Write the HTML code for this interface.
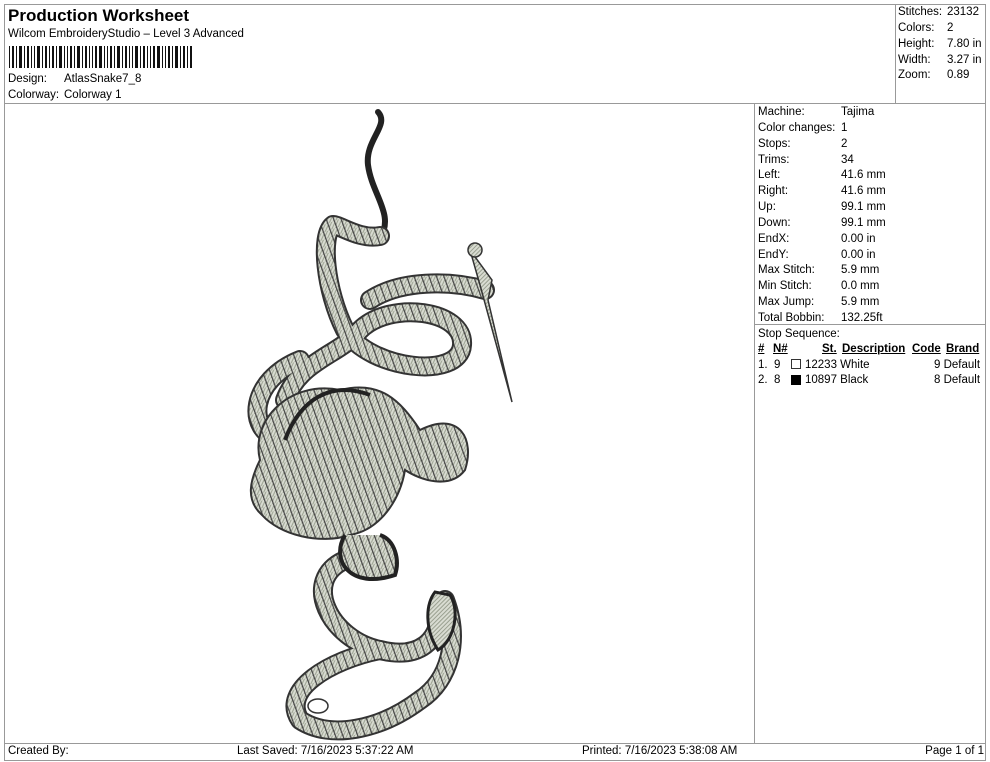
<!DOCTYPE html>
<html><head><meta charset="utf-8"><style>
*{margin:0;padding:0;box-sizing:border-box}
body{width:990px;height:762px;background:#fff;font-family:"Liberation Sans",Arial,sans-serif;color:#000;position:relative;overflow:hidden}
.a{position:absolute;white-space:nowrap}
.l{position:absolute;background:#999}
.t{font-size:11.5px}
.r div{height:15.85px;line-height:15.85px}
</style></head><body>
<div class="l" style="left:4px;top:4px;width:982px;height:1px"></div>
<div class="l" style="left:4px;top:4px;width:1px;height:757px"></div>
<div class="l" style="left:985px;top:4px;width:1px;height:757px"></div>
<div class="l" style="left:4px;top:103px;width:982px;height:1px"></div>
<div class="l" style="left:895px;top:4px;width:1px;height:99px"></div>
<div class="l" style="left:754px;top:103px;width:1px;height:640px"></div>
<div class="l" style="left:754px;top:324px;width:232px;height:1px"></div>
<div class="l" style="left:4px;top:743px;width:982px;height:1px"></div>
<div class="l" style="left:4px;top:760px;width:982px;height:1px"></div>

<div class="a" style="left:8px;top:6px;font-size:17px;font-weight:bold">Production Worksheet</div>
<div class="a t" style="left:8px;top:28px">Wilcom EmbroideryStudio – Level 3 Advanced</div>
<svg class="a" style="left:9px;top:46px" width="185" height="22">
<g fill="#111">
<rect x="0" width="1" height="22"/><rect x="3" width="2" height="22"/><rect x="7" width="1" height="22"/><rect x="10" width="3" height="22"/><rect x="15" width="1" height="22"/><rect x="18" width="2" height="22"/><rect x="22" width="1" height="22"/><rect x="25" width="1" height="22"/><rect x="28" width="3" height="22"/><rect x="33" width="1" height="22"/><rect x="36" width="2" height="22"/><rect x="40" width="1" height="22"/><rect x="43" width="2" height="22"/><rect x="47" width="1" height="22"/><rect x="50" width="3" height="22"/><rect x="55" width="1" height="22"/><rect x="58" width="1" height="22"/><rect x="61" width="2" height="22"/><rect x="65" width="1" height="22"/><rect x="68" width="3" height="22"/><rect x="73" width="1" height="22"/><rect x="76" width="2" height="22"/><rect x="80" width="1" height="22"/><rect x="83" width="1" height="22"/><rect x="86" width="2" height="22"/><rect x="90" width="3" height="22"/><rect x="95" width="1" height="22"/><rect x="98" width="1" height="22"/><rect x="101" width="2" height="22"/><rect x="105" width="1" height="22"/><rect x="108" width="3" height="22"/><rect x="113" width="1" height="22"/><rect x="116" width="2" height="22"/><rect x="120" width="1" height="22"/><rect x="123" width="1" height="22"/><rect x="126" width="3" height="22"/><rect x="131" width="1" height="22"/><rect x="134" width="2" height="22"/><rect x="138" width="1" height="22"/><rect x="141" width="1" height="22"/><rect x="144" width="2" height="22"/><rect x="148" width="3" height="22"/><rect x="153" width="1" height="22"/><rect x="156" width="1" height="22"/><rect x="159" width="2" height="22"/><rect x="163" width="1" height="22"/><rect x="166" width="3" height="22"/><rect x="171" width="1" height="22"/><rect x="174" width="2" height="22"/><rect x="178" width="1" height="22"/><rect x="181" width="2" height="22"/>
</g></svg>
<div class="a t" style="left:8px;top:73px">Design:</div><div class="a t" style="left:64px;top:73px">AtlasSnake7_8</div>
<div class="a t" style="left:8px;top:89px">Colorway:</div><div class="a t" style="left:64px;top:89px">Colorway 1</div>

<div class="a t r" style="left:898px;top:5px"><div>Stitches:</div><div>Colors:</div><div>Height:</div><div>Width:</div><div>Zoom:</div></div>
<div class="a t r" style="left:947px;top:5px"><div>23132</div><div>2</div><div>7.80 in</div><div>3.27 in</div><div>0.89</div></div>

<div class="a t r" style="left:758px;top:105px"><div>Machine:</div><div>Color changes:</div><div>Stops:</div><div>Trims:</div><div>Left:</div><div>Right:</div><div>Up:</div><div>Down:</div><div>EndX:</div><div>EndY:</div><div>Max Stitch:</div><div>Min Stitch:</div><div>Max Jump:</div><div>Total Bobbin:</div><div>Stop Sequence:</div></div>
<div class="a t r" style="left:841px;top:105px"><div>Tajima</div><div>1</div><div>2</div><div>34</div><div>41.6 mm</div><div>41.6 mm</div><div>99.1 mm</div><div>99.1 mm</div><div>0.00 in</div><div>0.00 in</div><div>5.9 mm</div><div>0.0 mm</div><div>5.9 mm</div><div>132.25ft</div></div>
<div class="a t" style="left:758px;top:343px;font-weight:bold;text-decoration:underline">#</div>
<div class="a t" style="left:773px;top:343px;font-weight:bold;text-decoration:underline">N#</div>
<div class="a t" style="left:822px;top:343px;font-weight:bold;text-decoration:underline">St.</div>
<div class="a t" style="left:842px;top:343px;font-weight:bold;text-decoration:underline">Description</div>
<div class="a t" style="left:912px;top:343px;font-weight:bold;text-decoration:underline">Code</div>
<div class="a t" style="left:946px;top:343px;font-weight:bold;text-decoration:underline">Brand</div>
<div class="a t" style="left:758px;top:359px">1.&nbsp; 9</div><div class="a" style="left:791px;top:359px;width:10px;height:10px;border:1px solid #333"></div><div class="a t" style="left:805px;top:359px">12233 White</div><div class="a t" style="left:934px;top:359px">9 Default</div>
<div class="a t" style="left:758px;top:374px">2.&nbsp; 8</div><div class="a" style="left:791px;top:375px;width:10px;height:10px;background:#000"></div><div class="a t" style="left:805px;top:374px">10897 Black</div><div class="a t" style="left:934px;top:374px">8 Default</div>

<div class="a t" style="left:8px;top:745px">Created By:</div>
<div class="a t" style="left:237px;top:745px">Last Saved: 7/16/2023 5:37:22 AM</div>
<div class="a t" style="left:582px;top:745px">Printed: 7/16/2023 5:38:08 AM</div>
<div class="a t" style="right:6px;top:745px">Page 1 of 1</div>

<svg class="a" style="left:0;top:0" width="754" height="743">
<defs>
<pattern id="p" width="3" height="3" patternUnits="userSpaceOnUse" patternTransform="rotate(45)">
<rect width="3" height="3" fill="#d9dcd2"/><rect width="1" height="3" fill="#9aa090"/>
</pattern>
<pattern id="q" width="7" height="7" patternUnits="userSpaceOnUse" patternTransform="rotate(-20)">
<rect width="7" height="7" fill="url(#p)"/><rect width="1.2" height="7" fill="#444"/>
</pattern>
</defs>
<path d="M378 112 C390 125,365 140,368 165 C372 195,395 215,380 238" stroke="#222" stroke-width="6" fill="none" stroke-linecap="round"/>
<g fill="none" stroke-linecap="round" stroke-linejoin="round">
<g stroke="#333" stroke-width="20">
<path d="M380 236 C360 240,340 225,333 225 C320 235,325 290,345 330 C370 370,460 380,462 345 C465 310,390 300,360 330 C340 355,300 360,285 400"/>
<path d="M370 300 C400 280,450 280,485 290"/>
<path d="M300 360 C250 380,245 430,280 440"/>
<path d="M345 560 C300 580,330 640,380 650 C420 660,440 640,440 610"/>
<path d="M380 650 C330 660,280 690,300 720 C330 740,380 730,420 700 C450 680,460 640,445 600"/>
</g>
<g stroke="url(#q)" stroke-width="16">
<path d="M380 236 C360 240,340 225,333 225 C320 235,325 290,345 330 C370 370,460 380,462 345 C465 310,390 300,360 330 C340 355,300 360,285 400"/>
<path d="M370 300 C400 280,450 280,485 290"/>
<path d="M300 360 C250 380,245 430,280 440"/>
<path d="M345 560 C300 580,330 640,380 650 C420 660,440 640,440 610"/>
<path d="M380 650 C330 660,280 690,300 720 C330 740,380 730,420 700 C450 680,460 640,445 600"/>
</g>
</g>
<path d="M260 460 C250 420,290 380,340 390 C380 380,400 400,420 430 C460 410,475 440,465 470 C450 490,420 480,405 470 C400 500,380 530,350 535 C320 545,280 535,262 515 C245 500,250 480,260 460 Z" fill="url(#q)" stroke="#333" stroke-width="2"/>
<path d="M285 440 C300 400,330 380,370 395" stroke="#222" stroke-width="4" fill="none"/>
<path d="M345 535 C330 560,350 590,395 575 C400 560,395 540,380 535" fill="url(#q)" stroke="#222" stroke-width="4"/>
<path d="M470 250 L480 285 L512 402 L488 300 L492 280 Z" fill="url(#p)" stroke="#333" stroke-width="1.5"/>
<circle cx="475" cy="250" r="7" fill="url(#p)" stroke="#333" stroke-width="1.5"/>
<path d="M435 592 C425 605,425 630,438 650 C455 640,460 610,450 595 Z" fill="url(#p)" stroke="#222" stroke-width="3"/>
<ellipse cx="318" cy="706" rx="10" ry="7" fill="#fff" stroke="#333" stroke-width="1.5"/>
</svg>
</body></html>
